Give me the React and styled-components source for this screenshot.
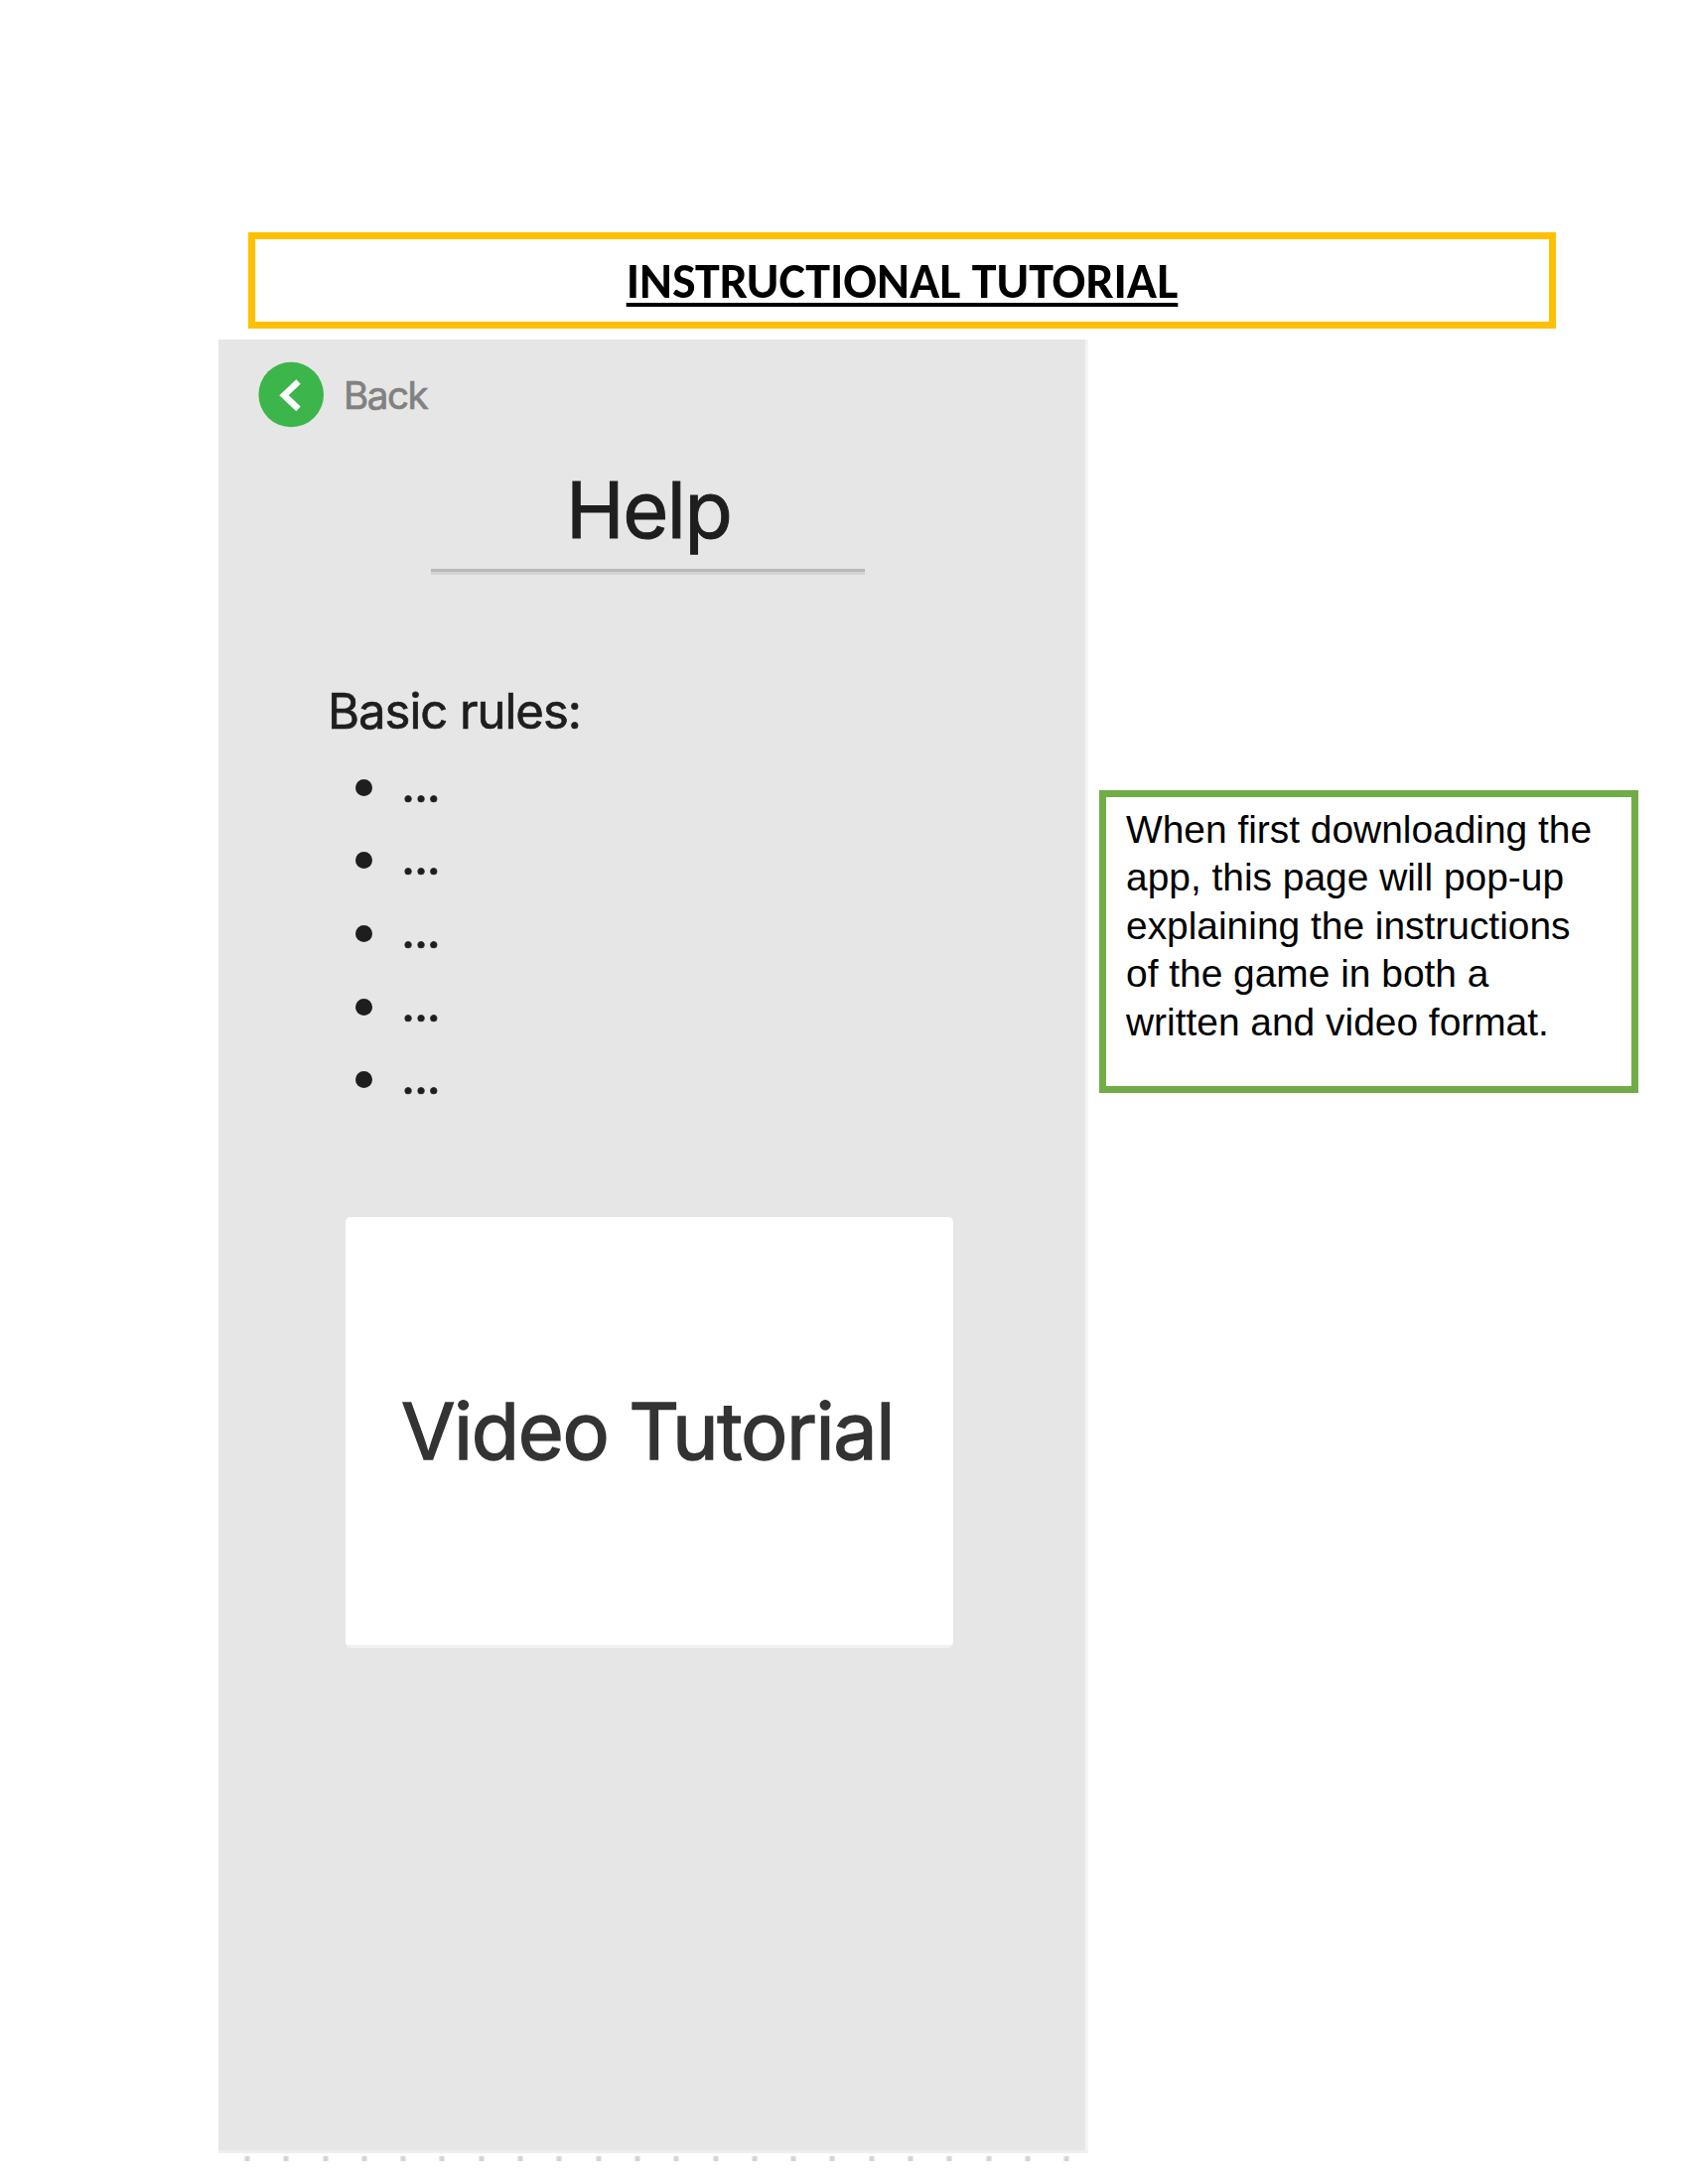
import React from "react";
import styled, { createGlobalStyle } from "styled-components";

const GlobalStyle = createGlobalStyle`
  * { box-sizing: border-box; }
  body { margin: 0; background: #fff; }
  h1, h2, h3, p, ul { margin: 0; padding: 0; font-weight: 400; }
`;

const Page = styled.main`
  width: 1700px;
  height: 2200px;
  padding-top: 234px;
  overflow: hidden;
  background: #fff;
  font-family: Inter, Roboto, sans-serif;
`;

const TitleBox = styled.header`
  display: flex;
  justify-content: center;
  width: 1317px;
  height: 97px;
  margin-left: 250px;
  padding-top: 16px;
  border: 7px solid #ffc000;
`;

const Title = styled.h1`
  height: 52px;
  font: 700 50px/52px Carlito, Lato, sans-serif;
  white-space: nowrap;
  color: #000;
  text-decoration: underline;
  text-decoration-thickness: 4px;
  text-underline-offset: 5px;
  text-decoration-skip-ink: none;
`;

const Body = styled.div`
  display: flex;
  align-items: flex-start;
  margin-top: 11px;
  padding-left: 220px;
`;

const Screen = styled.section`
  display: flex;
  flex-direction: column;
  align-items: flex-start;
  width: 876px;
  height: 1827px;
  padding-top: 22px;
  background: #e6e6e6;
  border-right: 3px solid #f4f4f4;
  border-bottom: 3px solid #efefef;
  color: #1e1e1e;
`;

const BackButton = styled.button`
  display: flex;
  align-items: center;
  gap: 19px;
  height: 67px;
  margin-left: 40px;
  padding: 0;
  border: 0;
  background: none;
`;

const Label = styled.span`
  font: 400 ${(p) => p.$size}px/${(p) => p.$line}px Inter, sans-serif;
  letter-spacing: ${(p) => p.$track}px;
  color: ${(p) => p.$color || "#1e1e1e"};
  -webkit-text-stroke: ${(p) => p.$stroke || 0.7}px currentColor;
  white-space: nowrap;
`;

const Heading = styled(Label).attrs({ as: "h2" })`
  margin: 34px 0 12px 350px;
`;

const Rule = styled.div`
  width: 437px;
  height: 6px;
  margin-left: 214px;
  background: #b8b8b8;
  border-bottom: 3px solid #d3d3d3;
`;

const Subheading = styled(Label).attrs({ as: "h3" })`
  margin: 108px 0 7px 110px;
`;

const Rules = styled.ul`
  margin-left: 138px;
  list-style: none;
`;

const RuleItem = styled.li`
  display: flex;
  align-items: center;
  gap: 29px;
  height: 73.6px;
`;

const Bullet = styled.span`
  width: 17px;
  height: 17px;
  margin-top: 5px;
  border-radius: 50%;
  background: #1e1e1e;
`;

const VideoCard = styled.div`
  display: flex;
  width: 612px;
  height: 434px;
  margin: 104px 0 0 128px;
  padding: 167px 0 0 56px;
  border-radius: 5px;
  border-bottom: 3px solid #f1f1f1;
  background: #fff;
`;

const Dots = styled.div`
  display: flex;
  gap: 33.3px;
  margin-top: 3px;
  padding-left: 26px;
`;

const Dot = styled.span`
  flex: none;
  width: 6px;
  height: 5px;
  background: linear-gradient(90deg, #ececec, #d2d2d2 40% 60%, #ececec);
`;

const Note = styled.aside`
  width: 543px;
  height: 305px;
  margin: 454px 0 0 11px;
  padding: 9px 0 0 20px;
  border: 7px solid #70ad47;
`;

const NoteText = styled.p`
  font: 400 38.9px/48.4px "Liberation Sans", Arial, sans-serif;
  color: #000;
  white-space: pre-line;
`;

const NOTE = [
  "When first downloading the",
  "app, this page will pop-up",
  "explaining the instructions",
  "of the game in both a",
  "written and video format.",
].join("\n");

function BackIcon() {
  return (
    <svg width="67" height="67" viewBox="0 0 67 67">
      <circle cx="33.2" cy="33.5" r="32.8" fill="#3cb54a" />
      <path d="M40.5 20.5 L26 34.2 L40.5 47.8" fill="none" stroke="#fff" strokeWidth="6.4" />
    </svg>
  );
}

export default function App() {
  return (
    <Page>
      <GlobalStyle />
      <TitleBox>
        <Title>INSTRUCTIONAL TUTORIAL</Title>
      </TitleBox>
      <Body>
        <div>
          <Screen>
            <BackButton>
              <BackIcon />
              <Label $size={38.5} $line={46} $track={-1.4} $color="#818181">Back</Label>
            </BackButton>
            <Heading $size={79} $line={96} $track={-1.5} $stroke={1}>Help</Heading>
            <Rule />
            <Subheading $size={49} $line={60} $track={-1}>Basic rules:</Subheading>
            <Rules>
              {[1, 2, 3, 4, 5].map((n) => (
                <RuleItem key={n}>
                  <Bullet />
                  <Label $size={49} $line={60} $track={-1.2}>...</Label>
                </RuleItem>
              ))}
            </Rules>
            <VideoCard>
              <Label $size={79} $line={96} $track={-1.4} $stroke={1.4} $color="#333">Video Tutorial</Label>
            </VideoCard>
          </Screen>
          <Dots>
            {Array.from({ length: 22 }, (_, i) => (
              <Dot key={i} />
            ))}
          </Dots>
        </div>
        <Note>
          <NoteText>{NOTE}</NoteText>
        </Note>
      </Body>
    </Page>
  );
}
